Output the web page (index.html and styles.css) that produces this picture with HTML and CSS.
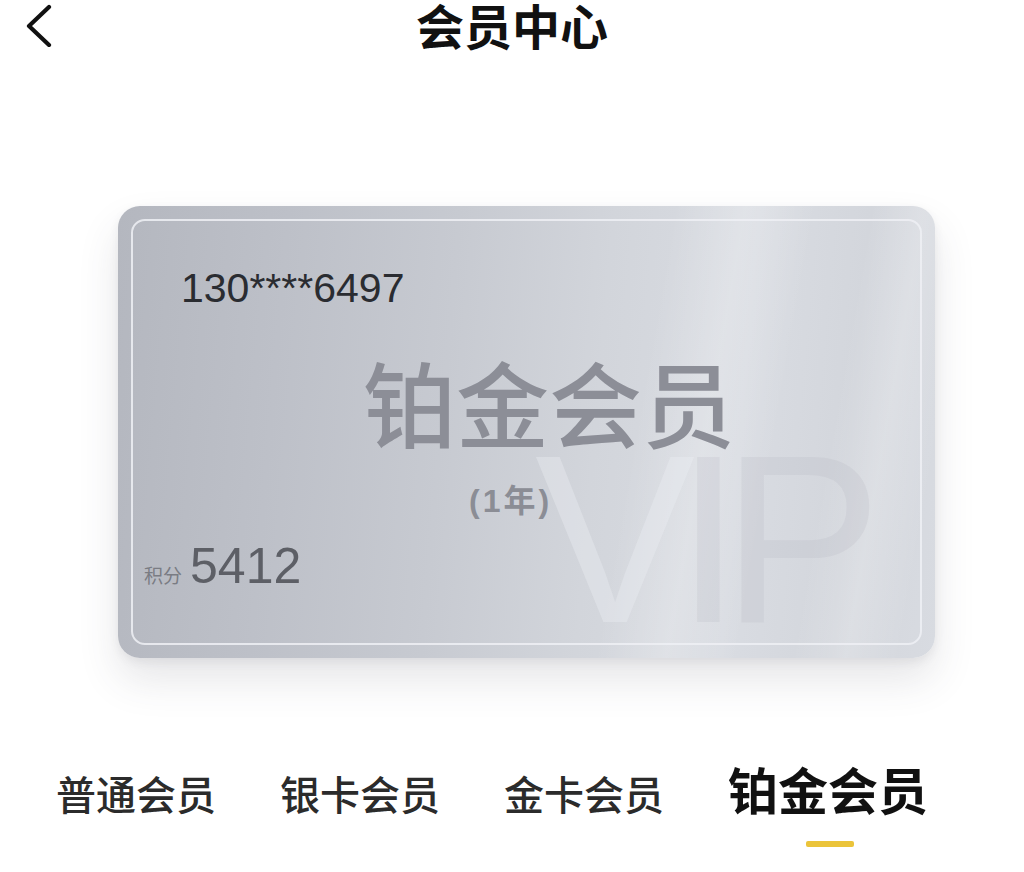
FILE: index.html
```html
<!DOCTYPE html>
<html lang="zh-CN">
<head>
<meta charset="utf-8">
<title>会员中心</title>
<link rel="stylesheet" href="styles.css">
</head>
<body>
<header class="topbar">
  <div class="back">
    <svg width="30" height="46" viewBox="0 0 30 46" aria-hidden="true">
      <polyline points="23,6 3,25 23,44" fill="none" stroke="#111" stroke-width="4.2" stroke-linecap="round" stroke-linejoin="round"/>
    </svg>
  </div>
  <h1 class="title">会员中心</h1>
  <div></div>
</header>

<main>
  <section class="card">
    <div class="frame">
      <div class="watermark" aria-hidden="true"><span class="wm-v">V</span><span class="wm-i">I</span><span class="wm-p">P</span></div>
      <div class="phone">130****6497</div>
      <div class="level">铂金会员</div>
      <div class="period">(1年)</div>
      <div class="points"><span class="points-label">积分</span><span class="points-num">5412</span></div>
    </div>
  </section>

  <nav class="tabs">
    <div class="tab">普通会员</div>
    <div class="tab">银卡会员</div>
    <div class="tab">金卡会员</div>
    <div class="tab active">铂金会员</div>
  </nav>
</main>
</body>
</html>
```

FILE: styles.css
```css
html, body {
  margin: 0;
  padding: 0;
  background: #ffffff;
}
body {
  width: 1024px;
  height: 872px;
  overflow: hidden;
  font-family: "Noto Sans CJK SC", "Noto Sans", sans-serif;
  color: #111;
}

.topbar {
  display: grid;
  grid-template-columns: 1fr auto 1fr;
  align-items: start;
  height: 52px;
}
.back {
  padding-left: 26px;
  padding-top: 1px;
}
.back svg {
  display: block;
}
.title {
  margin: 0;
  font-size: 48px;
  line-height: 52px;
  font-weight: 700;
  color: #111;
  transform: translateY(-2px);
}

.card {
  position: relative;
  margin: 154px 0 0 118px;
  width: 817px;
  height: 452px;
  box-sizing: border-box;
  padding: 13px;
  border-radius: 22px;
  background:
    linear-gradient(100deg, rgba(255,255,255,0) 0%, rgba(255,255,255,0) 62%, rgba(255,255,255,0.22) 70%, rgba(255,255,255,0) 78%, rgba(255,255,255,0) 84%, rgba(255,255,255,0.2) 90%, rgba(255,255,255,0) 96%),
    linear-gradient(95deg, #b4b7bf 0%, #bdc0c8 20%, #c7cad1 40%, #d2d5db 58%, #d9dce2 75%, #d3d6dc 88%, #d8dbe1 100%);
  box-shadow: 0 22px 40px rgba(60, 64, 80, 0.13), 0 4px 10px rgba(60, 64, 80, 0.08);
}
.frame {
  position: relative;
  height: 100%;
  box-sizing: border-box;
  border: 2px solid rgba(238, 240, 244, 0.85);
  border-radius: 14px;
  overflow: hidden;
}

.watermark {
  position: absolute;
  left: 402px;
  top: 198px;
  font-family: "Liberation Sans", Arial, sans-serif;
  font-size: 240px;
  line-height: 240px;
  font-weight: 400;
  letter-spacing: -20px;
  white-space: nowrap;
}
.wm-v {
  color: rgba(236, 238, 243, 0.4);
}
.wm-i, .wm-p {
  color: rgba(165, 170, 182, 0.16);
}

.phone {
  position: relative;
  margin: 47px 0 0 48px;
  font-family: "Liberation Sans", Arial, sans-serif;
  font-size: 41px;
  line-height: 40px;
  color: #2a2c31;
}
.level {
  position: relative;
  margin: 47px 0 0 230px;
  font-family: "Noto Sans CJK SC", sans-serif;
  font-size: 93px;
  line-height: 92px;
  font-weight: 500;
  color: #8c8e97;
}
.period {
  position: relative;
  margin: 38px 0 0 336px;
  font-family: "Liberation Sans", "Noto Sans CJK SC", sans-serif;
  font-size: 32px;
  line-height: 32px;
  font-weight: 700;
  color: #8b8d95;
  letter-spacing: 3px;
}
.points {
  position: relative;
  margin: 24px 0 0 11px;
  font-family: "Liberation Sans", Arial, sans-serif;
  font-size: 50px;
  line-height: 50px;
  color: #5d5f66;
}
.points-label {
  font-family: "Noto Sans CJK SC", sans-serif;
  font-size: 19px;
  color: #7a7c83;
  margin-right: 8px;
}

.tabs {
  display: flex;
  align-items: baseline;
  gap: 64px;
  padding-left: 56px;
  margin-top: 102px;
}
.tab {
  position: relative;
  font-size: 40px;
  line-height: 50px;
  font-weight: 500;
  color: #2b2b2b;
}
.tab.active {
  font-size: 50px;
  line-height: 56px;
  font-weight: 700;
  color: #111;
}
.tab.active::after {
  content: "";
  position: absolute;
  left: 50%;
  bottom: -31px;
  width: 48px;
  height: 6px;
  margin-left: -22px;
  border-radius: 2px;
  background: #ebc43a;
}
```
